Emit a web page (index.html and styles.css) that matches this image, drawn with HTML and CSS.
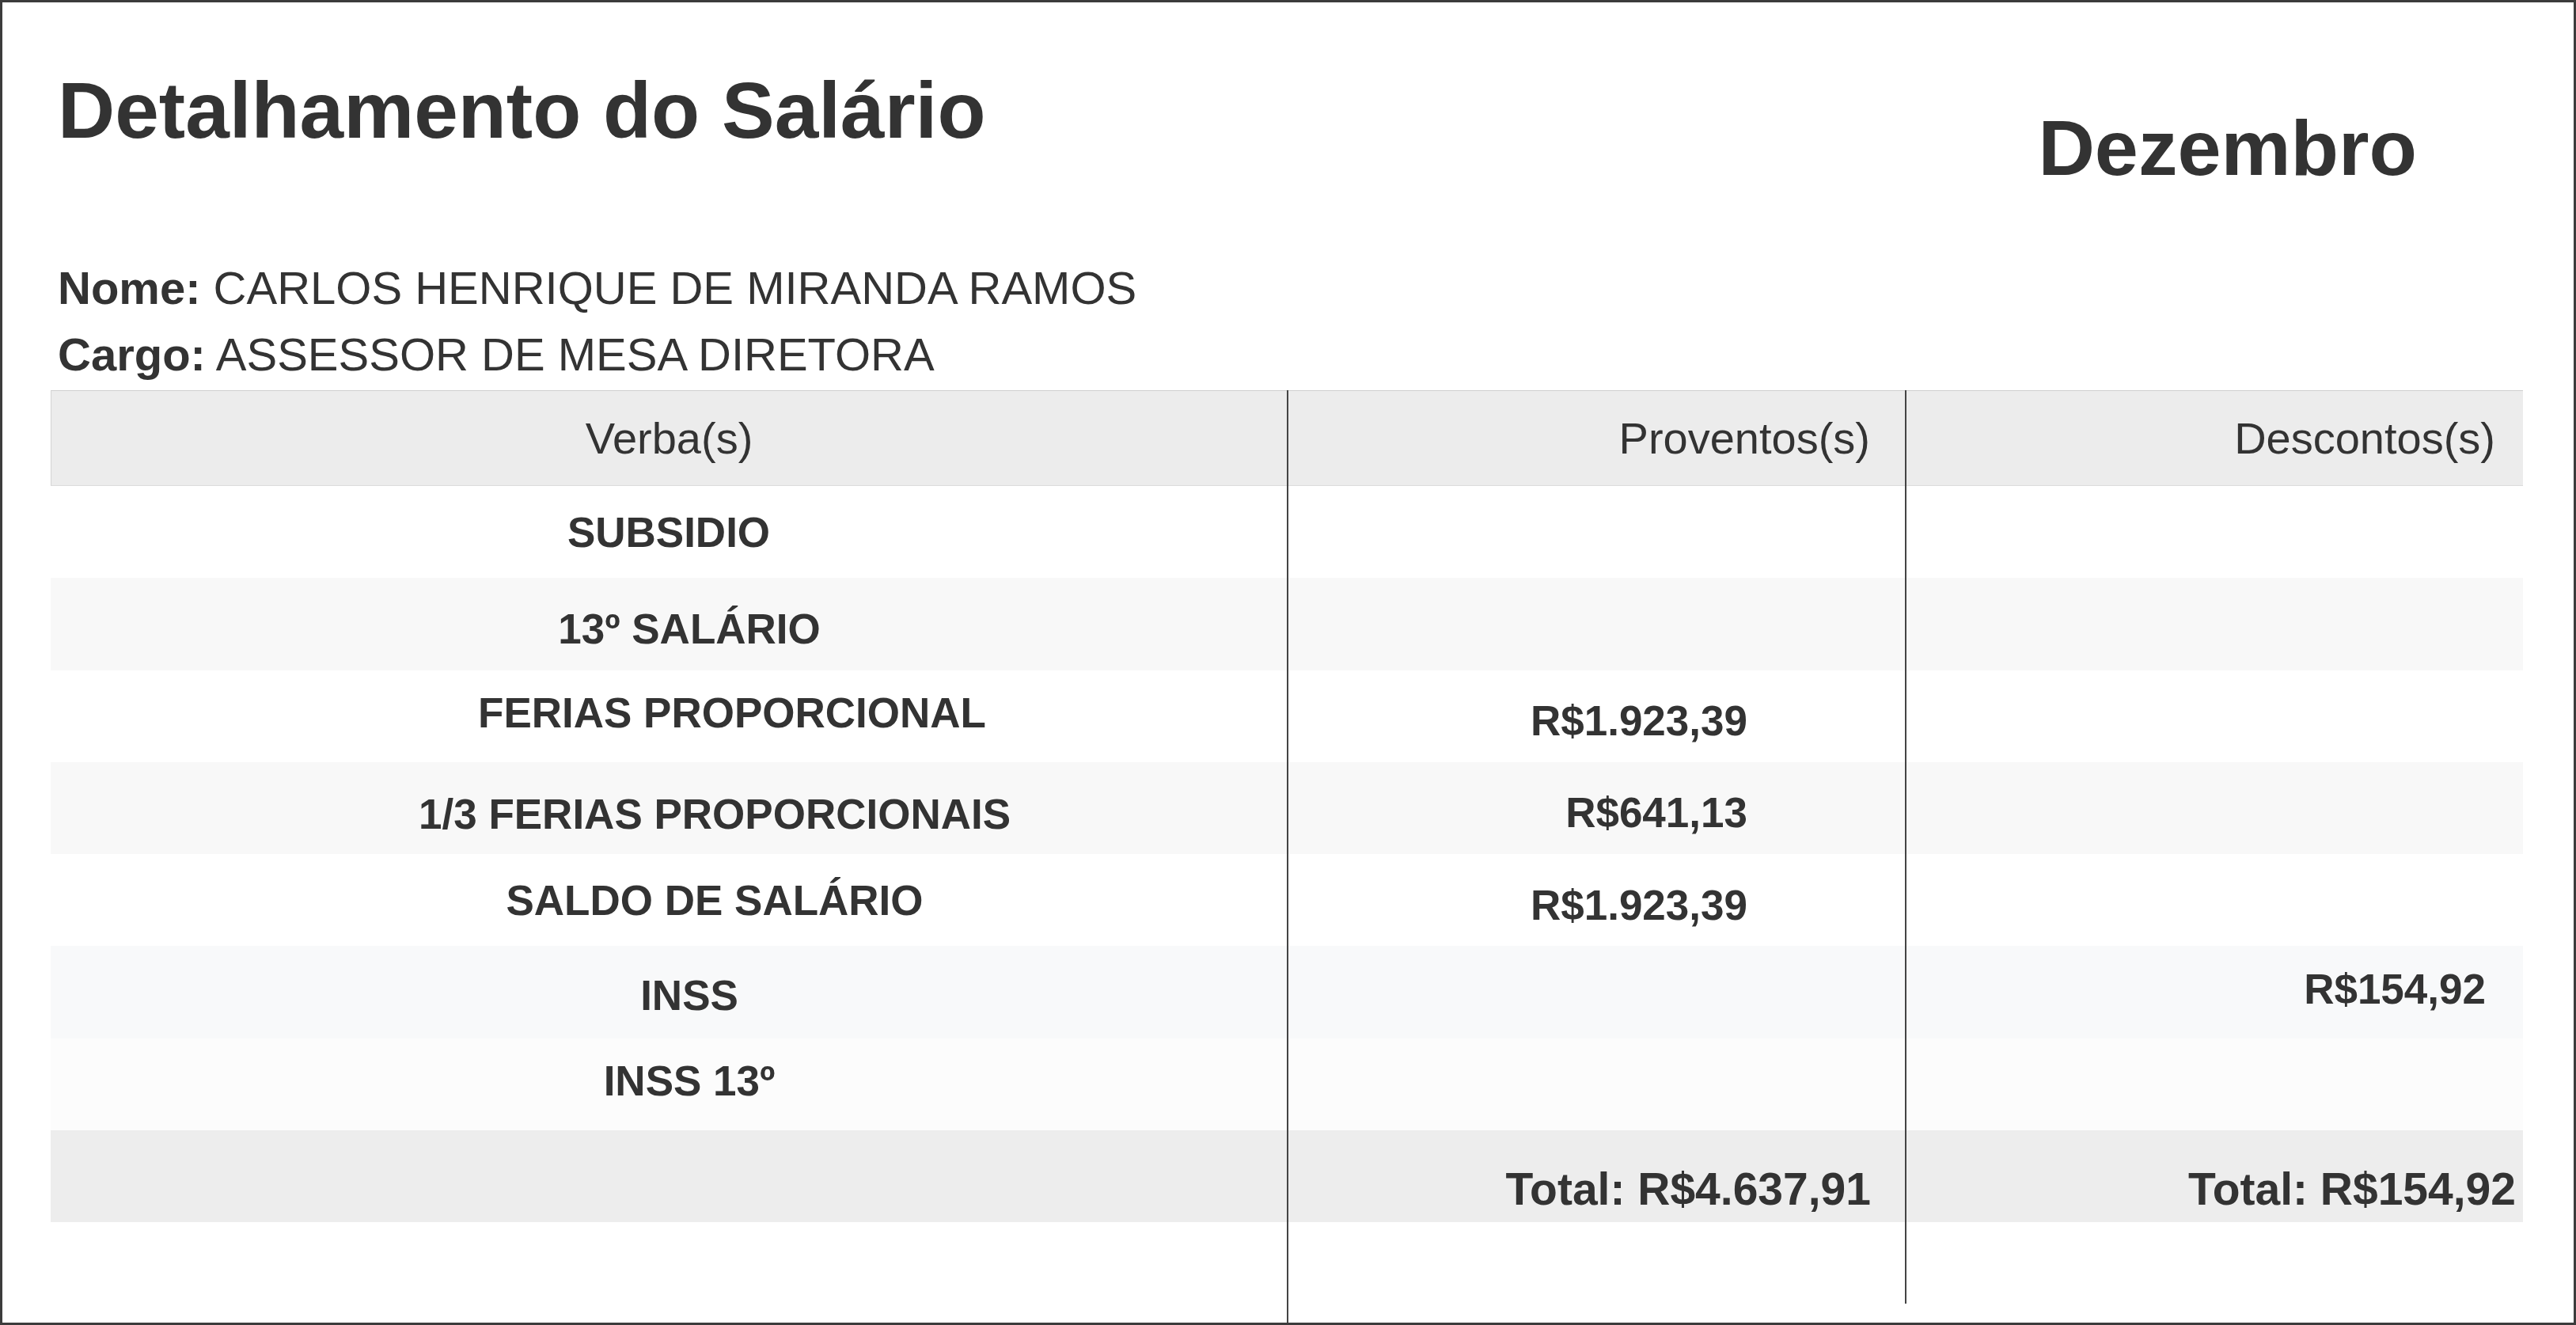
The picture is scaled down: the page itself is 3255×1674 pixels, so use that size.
FILE: index.html
```html
<!DOCTYPE html>
<html lang="pt-BR">
<head>
<meta charset="utf-8">
<title>Detalhamento do Salário</title>
<link rel="stylesheet" href="styles.css">
</head>
<body>
<div class="sheet">
  <div class="top">
    <div class="ident">
      <h1 class="title">Detalhamento do Salário</h1>
      <p class="info info-first"><b>Nome:</b> CARLOS HENRIQUE DE MIRANDA RAMOS</p>
      <p class="info"><b>Cargo:</b> ASSESSOR DE MESA DIRETORA</p>
    </div>
    <div class="month">Dezembro</div>
  </div>
  <div class="table">
    <div class="col col-verba">
      <div class="head">Verba(s)</div>
      <div class="cell">SUBSIDIO</div>
      <div class="cell nudge-1 dy-down-m">13º SALÁRIO</div>
      <div class="cell nudge-3 dy-up">FERIAS PROPORCIONAL</div>
      <div class="cell nudge-2 dy-down-l">1/3 FERIAS PROPORCIONAIS</div>
      <div class="cell nudge-2">SALDO DE SALÁRIO</div>
      <div class="cell nudge-1 dy-down-s">INSS</div>
      <div class="cell nudge-1 dy-up">INSS 13º</div>
      <div class="cell total"></div>
    </div>
    <div class="col col-prov">
      <div class="head">Proventos(s)</div>
      <div class="cell"></div>
      <div class="cell"></div>
      <div class="cell dy-down-m">R$1.923,39</div>
      <div class="cell dy-down-m">R$641,13</div>
      <div class="cell dy-down-m">R$1.923,39</div>
      <div class="cell"></div>
      <div class="cell"></div>
      <div class="cell total">Total: R$4.637,91</div>
    </div>
    <div class="col col-desc">
      <div class="head">Descontos(s)</div>
      <div class="cell"></div>
      <div class="cell"></div>
      <div class="cell"></div>
      <div class="cell"></div>
      <div class="cell"></div>
      <div class="cell dy-up">R$154,92</div>
      <div class="cell"></div>
      <div class="cell total">Total: R$154,92</div>
    </div>
  </div>
</div>
</body>
</html>
```
FILE: styles.css
```css
html, body {
  margin: 0;
  padding: 0;
}

body {
  font-family: "Liberation Sans", Arial, sans-serif;
  color: #333;
  background: #fff;
}

.sheet {
  box-sizing: border-box;
  height: 1674px;
  border: 3px solid #3c3c3c;
  padding: 0 64px 0 61px;
  display: flex;
  flex-direction: column;
}

.top {
  display: flex;
  justify-content: space-between;
  align-items: flex-start;
}

.ident {
  padding-left: 9px;
}

.title {
  margin: 0;
  padding-top: 76px;
  font-size: 100px;
  line-height: 120px;
  font-weight: 700;
}

.info {
  margin: 0;
  font-size: 58px;
  line-height: 84px;
}

.info-first {
  margin-top: 123px;
}

.month {
  margin-top: 124px;
  margin-right: 134px;
  font-size: 99px;
  line-height: 120px;
  font-weight: 700;
}

.table {
  display: flex;
  flex: 1;
  margin-top: 3px;
}

.col {
  box-sizing: border-box;
  display: flex;
  flex-direction: column;
}

.col-verba {
  width: 1562px;
}

.col-prov {
  width: 781px;
  border-left: 2px solid #444;
}

.col-desc {
  width: 781px;
  border-left: 2px solid #444;
  margin-bottom: 24px;
}

.head {
  box-sizing: border-box;
  height: 121px;
  background: #ececec;
  border-top: 1px solid #cfcfcf;
  border-bottom: 1px solid #dcdcdc;
  display: flex;
  align-items: center;
  font-size: 56px;
}

.col-verba .head {
  border-left: 1px solid #d4d4d4;
  justify-content: center;
}

.col-prov .head {
  justify-content: flex-end;
  padding-right: 44px;
}

.col-desc .head {
  justify-content: flex-end;
  padding-right: 35px;
}

.cell {
  box-sizing: border-box;
  height: 116.25px;
  display: flex;
  align-items: center;
  font-size: 53px;
  font-weight: 700;
  white-space: nowrap;
}

.cell:nth-child(3),
.cell:nth-child(5) {
  background: #f8f8f8;
}

.cell:nth-child(7) {
  background: #f8f9fa;
}

.cell:nth-child(8) {
  background: #fcfcfc;
}

.col-verba .cell {
  justify-content: center;
}

.nudge-1 {
  padding-left: 52px;
}

.nudge-2 {
  padding-left: 116px;
}

.nudge-3 {
  padding-left: 160px;
}

.dy-up {
  padding-bottom: 8px;
}

.dy-down-s {
  padding-top: 8px;
}

.dy-down-m {
  padding-top: 12px;
}

.dy-down-l {
  padding-top: 16px;
}

.col-prov .cell {
  justify-content: flex-end;
  padding-right: 199px;
}

.col-desc .cell {
  justify-content: flex-end;
  padding-right: 47px;
}

.cell.total {
  background: #ededed;
  font-size: 57px;
  padding-top: 32px;
}

.col-prov .cell.total {
  padding-right: 43px;
}

.col-desc .cell.total {
  padding-right: 9px;
}
```
